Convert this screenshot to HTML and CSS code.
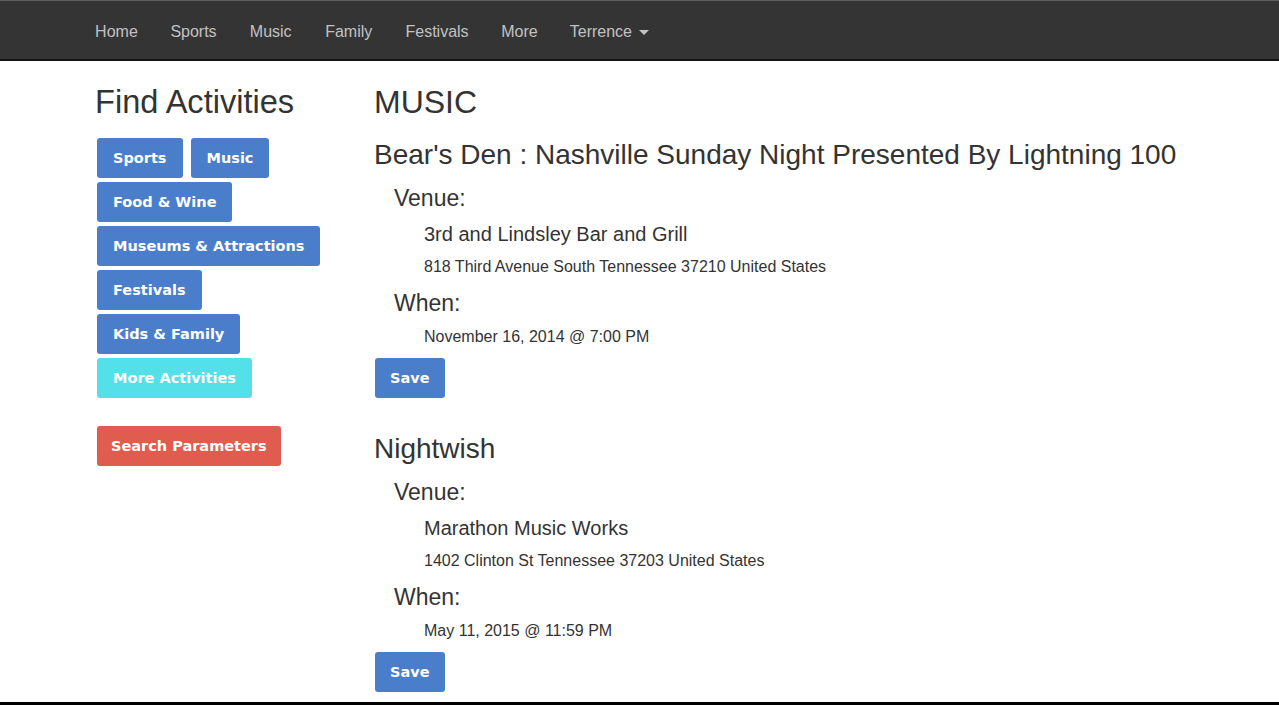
FILE: index.html
```html
<!DOCTYPE html>
<html lang="en">
<head>
<meta charset="utf-8">
<title>Find Activities - Music</title>
<link rel="stylesheet" href="styles.css">
</head>
<body>
<nav class="navbar">
  <ul class="nav">
    <li><a href="#">Home</a></li>
    <li><a href="#">Sports</a></li>
    <li><a href="#">Music</a></li>
    <li><a href="#">Family</a></li>
    <li><a href="#">Festivals</a></li>
    <li><a href="#">More</a></li>
    <li><a href="#">Terrence <span class="caret"></span></a></li>
  </ul>
</nav>
<div class="page">
  <aside class="sidebar">
    <h2 class="side-title">Find Activities</h2>
    <div class="cats">
      <a class="btn btn-blue" href="#">Sports</a>
      <a class="btn btn-blue" href="#">Music</a>
      <a class="btn btn-blue" href="#">Food &amp; Wine</a>
      <a class="btn btn-blue" href="#">Museums &amp; Attractions</a>
      <a class="btn btn-blue" href="#">Festivals</a>
      <a class="btn btn-blue" href="#">Kids &amp; Family</a>
      <a class="btn btn-cyan" href="#">More Activities</a>
    </div>
    <a class="btn btn-red search" href="#">Search Parameters</a>
  </aside>
  <main class="main">
    <h1 class="cat-title">MUSIC</h1>
    <section class="event">
      <h3 class="event-title">Bear's Den : Nashville Sunday Night Presented By Lightning 100</h3>
      <div class="details">
        <h4 class="label">Venue:</h4>
        <div class="info">
          <div class="venue-name">3rd and Lindsley Bar and Grill</div>
          <div class="small addr">818 Third Avenue South Tennessee 37210 United States</div>
        </div>
        <h4 class="label">When:</h4>
        <div class="info">
          <div class="small date">November 16, 2014 @ 7:00 PM</div>
        </div>
      </div>
      <a class="btn btn-blue save" href="#">Save</a>
    </section>
    <section class="event">
      <h3 class="event-title">Nightwish</h3>
      <div class="details">
        <h4 class="label">Venue:</h4>
        <div class="info">
          <div class="venue-name">Marathon Music Works</div>
          <div class="small addr">1402 Clinton St Tennessee 37203 United States</div>
        </div>
        <h4 class="label">When:</h4>
        <div class="info">
          <div class="small date">May 11, 2015 @ 11:59 PM</div>
        </div>
      </div>
      <a class="btn btn-blue save" href="#">Save</a>
    </section>
  </main>
</div>
<div class="frame-bottom"></div>
</body>
</html>
```
FILE: styles.css
```css
* { box-sizing: border-box; }
html, body { margin: 0; padding: 0; }
body {
  font-family: "Liberation Sans", Arial, sans-serif;
  color: #333;
  background: #fff;
  overflow: hidden;
  height: 705px;
}
a { text-decoration: none; }

.navbar {
  background: #343434;
  border-top: 1px solid #606060;
  border-bottom: 2px solid #161616;
  height: 61px;
}
.nav {
  list-style: none;
  margin: 0;
  padding: 0 0 0 78.5px;
  display: flex;
}
.nav a {
  display: block;
  padding: 21px 16.6px 17px;
  font-size: 16px;
  line-height: 20px;
  color: #c2c2c2;
}
.nav li:first-child a { padding-right: 16px; }
.nav li:nth-child(3) a { padding-right: 17px; }
.nav li:nth-child(6) a { padding-left: 16px; }
.nav li:last-child a { padding-left: 15.5px; }
.caret {
  display: inline-block;
  width: 0;
  height: 0;
  margin-left: 3px;
  vertical-align: middle;
  border-top: 5px solid #c2c2c2;
  border-left: 5px solid transparent;
  border-right: 5px solid transparent;
}

.page {
  display: flex;
  padding-left: 80px;
}
.sidebar {
  width: 279px;
  padding: 23px 15px 0;
}
.side-title {
  margin: 0;
  font-size: 32.6px;
  line-height: 36px;
  font-weight: normal;
}
.cats {
  display: flex;
  flex-wrap: wrap;
  width: 232px;
  gap: 4px 8px;
  margin: 18px 0 0 2px;
}
.btn {
  display: inline-block;
  height: 40px;
  line-height: 40px;
  padding: 0 16px;
  border-radius: 3px;
  color: #fff;
  font-family: "DejaVu Sans", Verdana, sans-serif;
  font-weight: bold;
  font-size: 14.5px;
  white-space: nowrap;
}
.btn-blue { background: #4a7ecb; }
.btn-cyan { background: #53e0e8; }
.btn-red { background: #e05c4f; }
.search { margin: 28px 0 0 2px; padding: 0 14px; }

.main {
  flex: 1;
  padding: 23px 15px 0;
}
.cat-title {
  margin: 0;
  font-size: 32px;
  line-height: 36px;
  font-weight: normal;
}
.event-title {
  margin: 19px 0 0;
  font-size: 28px;
  line-height: 32px;
  font-weight: normal;
}
.event + .event .event-title { margin-top: 35px; }
.details { padding-left: 20px; }
.label {
  margin: 14px 0 0;
  font-size: 23px;
  line-height: 26px;
  font-weight: normal;
}
.label + .info + .label { margin-top: 13px; }
.info { padding-left: 30px; }
.venue-name {
  margin-top: 11px;
  font-size: 20px;
  line-height: 24px;
}
.small {
  font-size: 16px;
  line-height: 20px;
}
.addr { margin-top: 11px; }
.date { margin-top: 11px; }
.save { margin: 11px 0 0 1px; padding: 0 15px; }

.frame-bottom {
  position: fixed;
  left: 0;
  right: 0;
  bottom: 0;
  height: 3px;
  background: #000;
}
```
